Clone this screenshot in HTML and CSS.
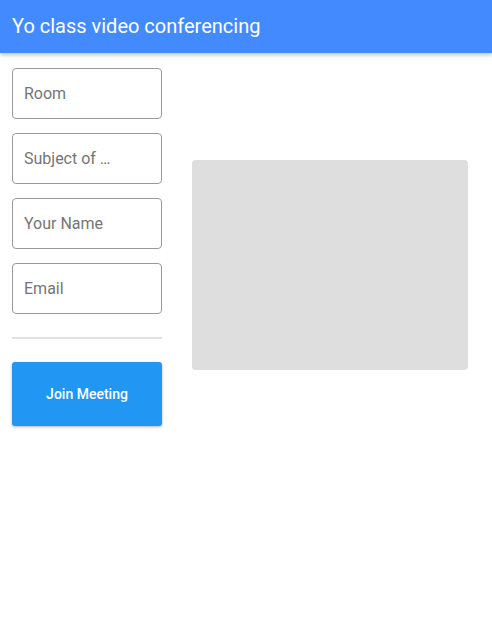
FILE: index.html
```html
<!DOCTYPE html>
<html>
<head>
<meta charset="utf-8">
<link rel="stylesheet" href="styles.css">
</head>
<body>
<header class="appbar">Yo class video conferencing</header>
<main class="content">
  <form class="form">
    <input class="field" type="text" placeholder="Room">
    <input class="field" type="text" placeholder="Subject of …">
    <input class="field" type="text" placeholder="Your Name">
    <input class="field" type="text" placeholder="Email">
    <hr class="divider">
    <button class="join" type="button">Join Meeting</button>
  </form>
  <div class="preview"></div>
</main>
</body>
</html>
```
FILE: styles.css
```css
* { box-sizing: border-box; }
html, body { margin: 0; padding: 0; background: #fff; }
body { font-family: Roboto, "Noto Sans", Arial, sans-serif; }
.appbar {
  height: 53px;
  background: #448aff;
  color: #fff;
  font-size: 20px;
  line-height: 53px;
  padding: 0 12px;
  box-shadow: 0 2px 4px rgba(0,0,0,0.25);
  position: relative;
}
.content {
  display: flex;
  align-items: flex-start;
  padding: 15px 12px;
}
.form {
  width: 150px;
  display: flex;
  flex-direction: column;
  gap: 14px;
}
.field {
  width: 150px;
  height: 51px;
  border: 1px solid #9a9a9a;
  border-radius: 4px;
  padding: 0 11px;
  font-family: inherit;
  font-size: 16px;
  color: #333;
  background: #fff;
  outline: none;
}
.field::placeholder { color: #757575; }
.divider {
  margin: 9px 0;
  border: 0;
  height: 2px;
  background: #e0e0e0;
}
.join {
  height: 64px;
  width: 150px;
  border: 0;
  border-radius: 3px;
  background: #2196f3;
  color: #fff;
  font-family: inherit;
  font-size: 14px;
  font-weight: 500;
  box-shadow: 0 1px 3px rgba(0,0,0,0.3);
}
.preview {
  margin-left: 30px;
  margin-top: 92px;
  width: 276px;
  height: 210px;
  background: #dedede;
  border-radius: 4px;
}
```
